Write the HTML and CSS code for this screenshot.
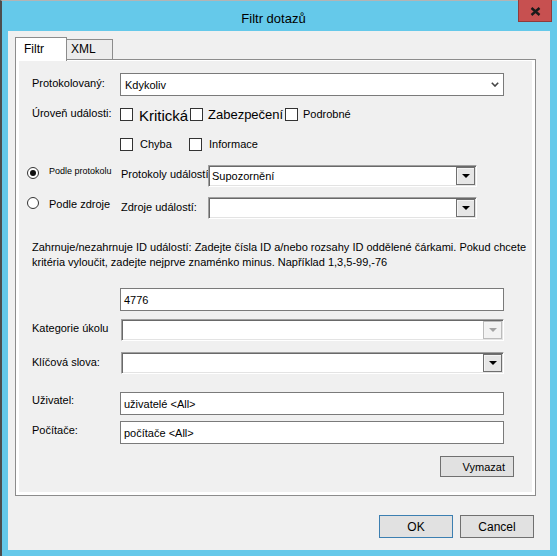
FILE: index.html
```html
<!DOCTYPE html>
<html lang="cs">
<head>
<meta charset="utf-8">
<title>Filtr dotazů</title>
<link rel="stylesheet" href="styles.css">
</head>
<body>
<div class="window">
  <div class="titlebar">
    <div class="title">Filtr dotazů</div>
    <div class="close">
      <svg width="11" height="9" viewBox="0 0 11 9"><path d="M1.5 1 L9.5 8 M9.5 1 L1.5 8" stroke="#1a1a1a" stroke-width="2.4" fill="none"/></svg>
    </div>
  </div>
  <div class="client">
    <div class="tabs">
      <div class="tab active">Filtr</div>
      <div class="tab inactive">XML</div>
    </div>
    <div class="panel">
      <div class="page">
        <div class="row row-a">
          <div class="lbl pt4">Protokolovaný:</div>
          <div class="select flat wide">
            <span>Kdykoliv</span>
            <svg class="chev" width="8" height="5" viewBox="0 0 8 5"><polyline points="0.8,0.8 4,4 7.2,0.8" fill="none" stroke="#444" stroke-width="1.6"/></svg>
          </div>
        </div>

        <div class="row row-b">
          <div class="lbl pt3">Úroveň události:</div>
          <div class="checks">
            <div class="chk w70 g6"><span class="box"></span><span class="t15">Kritická</span></div>
            <div class="chk w95 g5"><span class="box"></span><span class="t13">Zabezpečení</span></div>
            <div class="chk g5"><span class="box"></span><span class="tn">Podrobné</span></div>
          </div>
        </div>

        <div class="row row-c">
          <div class="lbl"></div>
          <div class="checks">
            <div class="chk w69 g7"><span class="box"></span><span class="tn">Chyba</span></div>
            <div class="chk g7"><span class="box"></span><span class="tn">Informace</span></div>
          </div>
        </div>

        <div class="row row-d">
          <div class="radio-item">
            <span class="radio on mt2"></span><span class="t9">Podle protokolu</span>
          </div>
          <div class="lbl2 pt25">Protokoly událostí</div>
          <div class="select sunken mid">
            <span class="val">Supozornění</span>
            <span class="ddbtn"><i class="tri"></i></span>
          </div>
        </div>

        <div class="row row-e">
          <div class="radio-item">
            <span class="radio"></span><span class="rlabel">Podle zdroje</span>
          </div>
          <div class="lbl2 pt35">Zdroje událostí:</div>
          <div class="select sunken mid">
            <span class="val"></span>
            <span class="ddbtn"><i class="tri"></i></span>
          </div>
        </div>

        <p class="hint">Zahrnuje/nezahrnuje ID událostí: Zadejte čísla ID a/nebo rozsahy ID oddělené čárkami. Pokud chcete<br>kritéria vyloučit, zadejte nejprve znaménko minus. Například 1,3,5-99,-76</p>

        <div class="row row-f">
          <div class="lbl"></div>
          <div class="input">4776</div>
        </div>

        <div class="row row-g">
          <div class="lbl pt25">Kategorie úkolu</div>
          <div class="select sunken long">
            <span class="val"></span>
            <span class="ddbtn disabled"><i class="tri"></i></span>
          </div>
        </div>

        <div class="row row-h">
          <div class="lbl pt35">Klíčová slova:</div>
          <div class="select sunken long">
            <span class="val"></span>
            <span class="ddbtn"><i class="tri"></i></span>
          </div>
        </div>

        <div class="row row-i">
          <div class="lbl pt15">Uživatel:</div>
          <div class="input">uživatelé &lt;All&gt;</div>
        </div>

        <div class="row row-j">
          <div class="lbl pt25">Počítače:</div>
          <div class="input">počítače &lt;All&gt;</div>
        </div>

        <div class="row row-k">
          <button class="btn clear">Vymazat</button>
        </div>
      </div>
    </div>
    <div class="dialog-buttons">
      <button class="btn dlg default">OK</button>
      <button class="btn dlg">Cancel</button>
    </div>
  </div>
</div>
</body>
</html>
```

FILE: styles.css
```css
* { box-sizing: border-box; }
html, body { margin: 0; padding: 0; }
body {
  width: 557px;
  height: 556px;
  overflow: hidden;
  font-family: "Liberation Sans", Arial, sans-serif;
  font-size: 11px;
  color: #000;
  background: #65c9ea;
}

.window {
  width: 557px;
  height: 556px;
  background: #65c9ea;
  border-left: 2px solid #4d4d4d;
  border-top: 1px solid #b4b4b4;
  padding: 0 7px 6px 6px;
  display: flex;
  flex-direction: column;
}

.titlebar {
  height: 30px;
  display: flex;
  align-items: flex-start;
  flex: none;
}
.title {
  flex: 1;
  text-align: center;
  font-size: 13px;
  line-height: 16px;
  padding-top: 10px;
  padding-left: 21px;
}
.close {
  width: 34px;
  height: 22px;
  margin-top: -1px;
  margin-right: -2px;
  background: #c75050;
  border: 1px solid #8f3b3b;
  border-top: none;
  display: flex;
  align-items: center;
  justify-content: center;
  padding-top: 1px;
}

.client {
  flex: 1;
  background: #f0f0f0;
  padding-top: 6px;
}

.tabs {
  display: flex;
  align-items: flex-end;
  height: 22px;
  margin-left: 7px;
}
.tab {
  font-size: 12px;
  line-height: 14px;
  border: 1px solid #8c8c8c;
  border-bottom: none;
}
.tab.active {
  position: relative;
  z-index: 1;
  width: 52px;
  height: 24px;
  margin-bottom: -2px;
  background: #fff;
  padding: 4px 0 0 8px;
}
.tab.inactive {
  width: 46px;
  height: 20px;
  border-left: none;
  background: #ececec;
  padding: 2px 0 0 4px;
}

.panel {
  margin-left: 7px;
  width: 521px;
  height: 437px;
  border: 1px solid #8c8c8c;
  background: #fff;
  padding: 1px 3px 3px 3px;
}
.page {
  height: 100%;
  background: #f0f0f0;
  padding-top: 1px;
}

.row { display: flex; align-items: flex-start; }
.lbl {
  width: 88px;
  margin-left: 13px;
  white-space: nowrap;
  line-height: 13px;
  flex: none;
}
.pt4 { padding-top: 4px; }
.pt3 { padding-top: 3px; }
.pt15 { padding-top: 1.5px; }
.pt25 { padding-top: 2.5px; }
.pt35 { padding-top: 3.5px; }
.mt2 { margin-top: 2px; }

.row-a { margin-top: 11px; height: 23px; }
.row-b { margin-top: 8px; height: 20px; }
.row-c { margin-top: 10px; height: 20px; }
.row-d { margin-top: 11px; height: 22px; }
.row-e { margin-top: 10px; height: 22px; }
.row-f { margin-top: 18px; height: 23px; }
.row-g { margin-top: 8px; height: 22px; }
.row-h { margin-top: 11px; height: 22px; }
.row-i { margin-top: 18px; height: 23px; }
.row-j { margin-top: 6px; height: 23px; }
.row-k { margin-top: 12px; height: 21px; }

.select {
  display: flex;
  align-items: center;
  justify-content: space-between;
  background: #fff;
  white-space: nowrap;
}
.select.flat {
  height: 23px;
  border: 1px solid #7a7a7a;
  padding: 0 4px 0 4px;
}
.wide { width: 384px; }
.select.sunken {
  height: 22px;
  border: 1px solid;
  border-color: #a0a0a0 #ffffff #ffffff #a0a0a0;
  box-shadow: inset 1px 1px 0 #696969, inset -1px -1px 0 #e3e3e3;
  padding: 0 1px 0 2px;
}
.mid { width: 269px; }
.long { width: 383px; margin-left: 1px; }
.val { padding-left: 1px; }

.ddbtn {
  width: 19px;
  height: 18px;
  border: 1px solid #6f6f6f;
  background: #e6e6e6;
  box-shadow: inset 1px 1px 0 #f4f4f4;
  display: flex;
  align-items: center;
  justify-content: center;
}
.tri {
  width: 0;
  height: 0;
  border-left: 4px solid transparent;
  border-right: 4px solid transparent;
  border-top: 4px solid #000;
}
.ddbtn.disabled {
  border-color: #bcbcbc;
  background: #f2f2f2;
}
.ddbtn.disabled .tri { border-top-color: #a3a3a3; }

.checks {
  display: flex;
  align-items: center;
  height: 20px;
}
.chk {
  display: flex;
  align-items: center;
  white-space: nowrap;
  flex: none;
}
.g5 { gap: 5px; }
.g6 { gap: 6px; }
.g7 { gap: 7px; }
.w69 { width: 69px; }
.w70 { width: 70px; }
.w95 { width: 95px; }
.box {
  width: 13px;
  height: 13px;
  border: 1px solid #333;
  background: #fff;
  flex: none;
}
.t15 { font-size: 15px; line-height: 17px; margin-top: 2px; }
.t13 { font-size: 13px; line-height: 15px; margin-top: 1px; }
.tn { font-size: 11px; line-height: 13px; margin-top: 1px; }

.radio-item {
  display: flex;
  align-items: flex-start;
  width: 94px;
  margin-left: 8px;
  flex: none;
  white-space: nowrap;
}
.radio {
  width: 12px;
  height: 12px;
  border: 1px solid #333;
  border-radius: 50%;
  background: #fff;
  margin-right: 10px;
  flex: none;
  display: flex;
  align-items: center;
  justify-content: center;
}
.radio.on::after {
  content: "";
  width: 6px;
  height: 6px;
  border-radius: 50%;
  background: #111;
}
.t9 { font-size: 9px; line-height: 11px; padding-top: 1px; }
.rlabel { font-size: 11px; line-height: 13px; padding-top: 1px; }
.lbl2 {
  width: 87px;
  white-space: nowrap;
  line-height: 13px;
  flex: none;
}

.hint {
  margin: 21px 0 0 13px;
  line-height: 15px;
  white-space: nowrap;
}

.input {
  width: 384px;
  height: 23px;
  border: 1px solid #7a7a7a;
  background: #fff;
  padding-left: 3px;
  display: flex;
  align-items: center;
  white-space: nowrap;
}

.btn {
  font-family: "Liberation Sans", Arial, sans-serif;
  color: #000;
  background: #e1e1e1;
  border: 1px solid #707070;
  margin: 0;
  padding: 0;
}
.clear {
  margin-left: auto;
  margin-right: 18px;
  width: 74px;
  height: 21px;
  font-size: 11px;
  text-align: right;
  padding-right: 8px;
}

.dialog-buttons {
  display: flex;
  justify-content: flex-end;
  gap: 7px;
  margin-top: 19px;
  margin-right: 16px;
}
.dlg {
  width: 74px;
  height: 23px;
  font-size: 12px;
}
.dlg.default { border-color: #3c7fb1; }
```
